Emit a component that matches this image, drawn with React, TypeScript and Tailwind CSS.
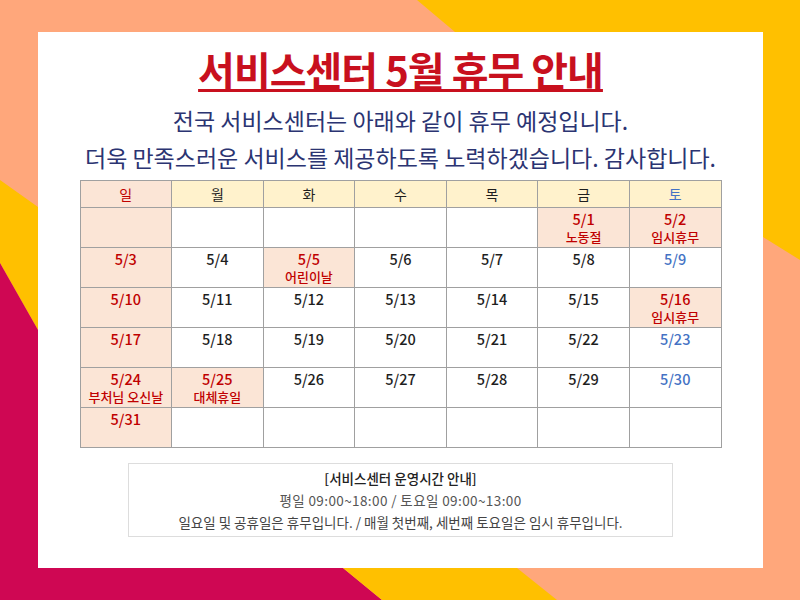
import React from 'react';

type Cell = {
  date?: string;
  note?: string;
  tone?: 'red' | 'blue' | 'black';
  shade?: boolean;
};

const headers = [
  { label: '일', tone: 'red', shade: true },
  { label: '월', tone: 'black' },
  { label: '화', tone: 'black' },
  { label: '수', tone: 'black' },
  { label: '목', tone: 'black' },
  { label: '금', tone: 'black' },
  { label: '토', tone: 'blue' },
];

const sun = (date?: string, note?: string): Cell => ({ date, note, tone: 'red', shade: true });
const day = (date: string): Cell => ({ date, tone: 'black' });
const sat = (date: string): Cell => ({ date, tone: 'blue' });
const off = (date: string, note: string): Cell => ({ date, note, tone: 'red', shade: true });
const empty: Cell = {};

const weeks: Cell[][] = [
  [sun(), empty, empty, empty, empty, off('5/1', '노동절'), off('5/2', '임시휴무')],
  [sun('5/3'), day('5/4'), off('5/5', '어린이날'), day('5/6'), day('5/7'), day('5/8'), sat('5/9')],
  [sun('5/10'), day('5/11'), day('5/12'), day('5/13'), day('5/14'), day('5/15'), off('5/16', '임시휴무')],
  [sun('5/17'), day('5/18'), day('5/19'), day('5/20'), day('5/21'), day('5/22'), sat('5/23')],
  [sun('5/24', '부처님 오신날'), off('5/25', '대체휴일'), day('5/26'), day('5/27'), day('5/28'), day('5/29'), sat('5/30')],
  [sun('5/31'), empty, empty, empty, empty, empty, empty],
];

const toneClass = {
  red: 'text-[#c00000]',
  blue: 'text-[#4472c4]',
  black: 'text-[#1e1e1e]',
};

const Background = () => (
  <svg className="absolute inset-0" width="800" height="600" viewBox="0 0 800 600">
    <rect width="800" height="600" fill="#ffa77b" />
    <polygon points="417,0 800,0 800,260 763,237 455,32" fill="#ffc000" />
    <polygon points="0,180 38,207 38,330 0,263" fill="#ffc000" />
    <polygon points="0,263 38,330 38,568 343,568 382,600 0,600" fill="#cf0753" />
    <polygon points="343,568 517,568 557,600 382,600" fill="#ffc000" />
  </svg>
);

export default function App() {
  return (
    <div
      className="relative w-[800px] h-[600px] overflow-hidden pt-[32px] pl-[38px]"
      style={{ fontFamily: '"Noto Sans CJK KR", "Noto Sans", sans-serif' }}
    >
      <Background />
      <div className="relative w-[725px] h-[536px] bg-white flex flex-col items-center pt-[14px]">
        <h1 className="text-[40px] leading-[46px] font-bold text-[#c8101e] tracking-[-1px] underline decoration-[2.5px] underline-offset-[3px]">
          서비스센터 5월 휴무 안내
        </h1>
        <p className="mt-[10px] text-[23px] leading-[37px] text-[#2b3472]">
          전국 서비스센터는 아래와 같이 휴무 예정입니다.
        </p>
        <p className="text-[23px] leading-[37px] text-[#2b3472]">
          더욱 만족스러운 서비스를 제공하도록 노력하겠습니다. 감사합니다.
        </p>

        <table className="mt-[4px] w-[642px] border-collapse table-fixed text-center">
          <thead>
            <tr className="h-[27px]">
              {headers.map((h) => (
                <th
                  key={h.label}
                  className={`border border-[#a0a0a0] text-[14px] font-normal ${
                    h.shade ? 'bg-[#fbe5d6]' : 'bg-[#fff2cc]'
                  } ${toneClass[h.tone as 'red' | 'blue' | 'black']}`}
                >
                  {h.label}
                </th>
              ))}
            </tr>
          </thead>
          <tbody>
            {weeks.map((week, i) => (
              <tr key={i} className="h-[40px]">
                {week.map((c, j) => (
                  <td
                    key={j}
                    className={`border border-[#a0a0a0] align-top pt-[2px] leading-[18px] font-medium ${
                      c.shade ? 'bg-[#fbe5d6]' : 'bg-white'
                    } ${toneClass[c.tone || 'black']}`}
                  >
                    {c.date && <div className="text-[14.5px]">{c.date}</div>}
                    {c.note && <div className="text-[13px]">{c.note}</div>}
                  </td>
                ))}
              </tr>
            ))}
          </tbody>
        </table>

        <div className="mt-[15px] w-[545px] border border-[#dddddd] py-[3px] text-center text-[13.5px] leading-[22px]">
          <p className="text-[#222222] font-medium">[서비스센터 운영시간 안내]</p>
          <p className="text-[#555555] tracking-[0.4px]">평일 09:00~18:00 / 토요일 09:00~13:00</p>
          <p className="text-[#444444]">
            일요일 및 공휴일은 휴무입니다. / 매월 첫번째, 세번째 토요일은 임시 휴무입니다.
          </p>
        </div>
      </div>
    </div>
  );
}
